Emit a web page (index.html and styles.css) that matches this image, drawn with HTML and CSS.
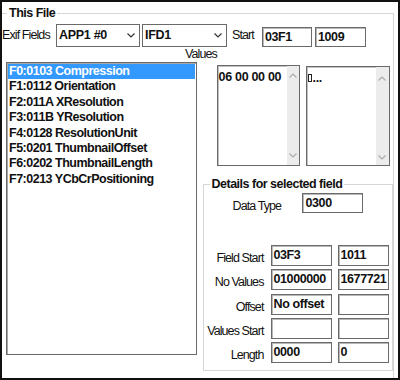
FILE: index.html
```html
<!DOCTYPE html>
<html lang="en">
<head>
    <meta charset="UTF-8" />
    <title>This File</title>
    <link rel="stylesheet" href="styles.css">
</head>
<body>
    <div class="window">
        <fieldset class="file-group">
            <legend>This File</legend>

            <div class="top-row">
                <span class="label exif-label">Exif Fields</span>
                <div class="select sel-app">
                    <span>APP1 #0</span>
                    <svg class="chevron" width="8" height="5" viewBox="0 0 8 5"><polyline points="0.5,0.5 4,4 7.5,0.5" /></svg>
                </div>
                <div class="select sel-ifd">
                    <span>IFD1</span>
                    <svg class="chevron" width="8" height="5" viewBox="0 0 8 5"><polyline points="0.5,0.5 4,4 7.5,0.5" /></svg>
                </div>
                <span class="label start-label">Start</span>
                <div class="box start-hex">03F1</div>
                <div class="box start-dec">1009</div>
            </div>

            <div class="values-label label">Values</div>

            <div class="main-row">
                <ul class="field-list">
                    <li class="selected">F0:0103 Compression</li>
                    <li>F1:0112 Orientation</li>
                    <li>F2:011A XResolution</li>
                    <li>F3:011B YResolution</li>
                    <li>F4:0128 ResolutionUnit</li>
                    <li>F5:0201 ThumbnailOffset</li>
                    <li>F6:0202 ThumbnailLength</li>
                    <li>F7:0213 YCbCrPositioning</li>
                </ul>

                <div class="side">
                    <div class="value-boxes">
                        <div class="memo hex-memo">
                            <div class="memo-text">06 00 00 00</div>
                            <div class="scroll">
                                <svg class="arrow" width="8" height="5" viewBox="0 0 8 5"><polyline points="0.5,4.5 4,1 7.5,4.5" /></svg>
                                <svg class="arrow" width="8" height="5" viewBox="0 0 8 5"><polyline points="0.5,0.5 4,4 7.5,0.5" /></svg>
                            </div>
                        </div>
                        <div class="memo ascii-memo">
                            <div class="memo-text"><span class="glyph-box"></span>...</div>
                            <div class="scroll">
                                <svg class="arrow" width="8" height="5" viewBox="0 0 8 5"><polyline points="0.5,4.5 4,1 7.5,4.5" /></svg>
                                <svg class="arrow" width="8" height="5" viewBox="0 0 8 5"><polyline points="0.5,0.5 4,4 7.5,0.5" /></svg>
                            </div>
                        </div>
                    </div>

                    <fieldset class="details-group">
                        <legend>Details for selected field</legend>

                        <div class="type-row">
                            <span class="label type-label">Data Type</span>
                            <div class="box type-box">0300</div>
                        </div>

                        <div class="detail-grid">
                            <span class="label detail-label">Field Start</span>
                            <div class="box">03F3</div>
                            <div class="box">1011</div>

                            <span class="label detail-label">No Values</span>
                            <div class="box">01000000</div>
                            <div class="box">1677721</div>

                            <span class="label detail-label">Offset</span>
                            <div class="box">No offset</div>
                            <div class="box"></div>

                            <span class="label detail-label">Values Start</span>
                            <div class="box"></div>
                            <div class="box"></div>

                            <span class="label detail-label">Length</span>
                            <div class="box">0000</div>
                            <div class="box">0</div>
                        </div>
                    </fieldset>
                </div>
            </div>
        </fieldset>
    </div>
</body>
</html>
```

FILE: styles.css
```css
:root{
    --ink: #111;
    --frame: #d6d6d6;
    --edge: #6a6a6a;
    --track: #ececec;
    --pick: #3399ff;
}

*{
    margin: 0;
    padding: 0;
    box-sizing: border-box;
}
body{
    background-color: #fff;
    color: var(--ink);
    font-family: "Liberation Sans", Arial, sans-serif;
}
.window{
    width: 400px;
    height: 380px;
    border: 2px solid #111;
    overflow: hidden;
    background-color: #fff;
}

/* group boxes */
fieldset{
    border: 1px solid var(--frame);
    min-width: 0;
}
legend{
    font-size: 12.5px;
    font-weight: bold;
    line-height: 15px;
    letter-spacing: -0.5px;
    padding: 0 2px;
}
.file-group{
    margin: 4px 4px 0 0;
    height: 372px;
    border-left: none;
    border-bottom: none;
}
.file-group > legend{
    margin-left: 5px;
}

/* labels and boxes */
.label{
    font-size: 12.5px;
    letter-spacing: -0.9px;
    white-space: nowrap;
}
.box{
    height: 20px;
    border: 1px solid var(--edge);
    box-shadow: inset 1px 1px 0 #b8b8b8;
    font-size: 12.5px;
    font-weight: bold;
    letter-spacing: -0.4px;
    line-height: 18px;
    padding-left: 2px;
    white-space: nowrap;
    overflow: hidden;
}

.top-row{
    display: flex;
    align-items: flex-end;
    height: 26px;
}
.top-row .label{
    line-height: 23px;
}
.exif-label{
    width: 54px;
}
.select{
    display: flex;
    align-items: center;
    justify-content: space-between;
    height: 23px;
    border: 1px solid var(--edge);
    font-size: 12.5px;
    font-weight: bold;
    letter-spacing: -0.3px;
    padding: 0 4px 1px 2px;
}
.sel-app{
    width: 84px;
}
.sel-ifd{
    width: 85px;
    margin-left: 2px;
}
.chevron polyline,
.arrow polyline{
    fill: none;
    stroke-width: 1.2;
}
.chevron polyline{
    stroke: #333;
}
.start-label{
    width: 30px;
    margin-left: 5px;
}
.start-hex{
    width: 50px;
}
.start-dec{
    width: 51px;
    margin-left: 3px;
}

.values-label{
    height: 15px;
    line-height: 15px;
    padding-left: 183px;
}

.main-row{
    display: flex;
    align-items: flex-start;
}

/* field list */
.field-list{
    list-style: none;
    width: 191px;
    height: 293px;
    margin-left: 4px;
    padding-top: 1px;
    border: 1px solid var(--edge);
    box-shadow: inset 1px 1px 0 #a8a8a8;
    font-size: 12.5px;
    font-weight: bold;
    letter-spacing: -0.5px;
}
.field-list li{
    height: 15.4px;
    line-height: 15.4px;
    margin: 0 1px;
    padding-left: 1px;
    white-space: nowrap;
}
.field-list .selected{
    background-color: var(--pick);
    color: #fff;
}

/* right side */
.side{
    width: 191px;
    margin-left: 6px;
}
.value-boxes{
    display: flex;
    align-items: flex-start;
    gap: 6px;
    padding-left: 14px;
    margin-top: 3px;
}
.memo{
    display: flex;
    border: 1px solid var(--edge);
    box-shadow: inset 1px 1px 0 #c0c0c0;
}
.hex-memo{
    width: 83px;
    height: 101px;
}
.ascii-memo{
    width: 84px;
    height: 100px;
    margin-top: 1px;
}
.memo-text{
    flex: 1;
    font-size: 12.5px;
    font-weight: bold;
    letter-spacing: -0.3px;
    line-height: 16px;
    padding: 3px 0 0 1px;
    white-space: nowrap;
}
.glyph-box{
    display: inline-block;
    width: 4px;
    height: 8px;
    border: 1px solid #222;
    margin-right: 1px;
}
.scroll{
    display: flex;
    flex-direction: column;
    justify-content: space-between;
    align-items: center;
    width: 12px;
    background-color: var(--track);
    padding: 7px 0 7px;
}
.ascii-memo .scroll{
    width: 13px;
    padding: 9px 0 5px;
}
.arrow polyline{
    stroke: #ababab;
}

/* details */
.details-group{
    height: 194px;
    margin-top: 11px;
}
.details-group > legend{
    margin-left: 6px;
}
.type-row{
    display: flex;
    margin-top: 1px;
}
.type-label{
    width: 69px;
    margin-left: 29px;
    padding-top: 6px;
    line-height: 15px;
}
.type-box{
    width: 61px;
    padding-left: 3px;
}
.detail-grid{
    display: grid;
    grid-template-columns: 61px 61px 51px;
    grid-auto-rows: 21px;
    column-gap: 6px;
    row-gap: 3.25px;
    margin-top: 31px;
}
.detail-grid .box{
    height: 21px;
    line-height: 19px;
}
.detail-label{
    text-align: right;
    padding-right: 1px;
    padding-top: 3px;
    line-height: 21px;
}
```
